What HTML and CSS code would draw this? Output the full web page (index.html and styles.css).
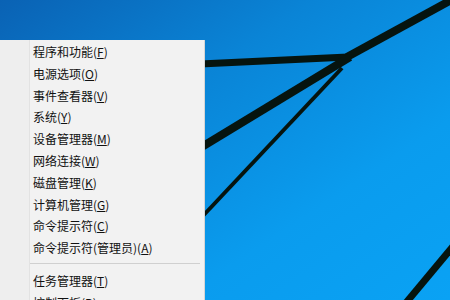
FILE: index.html
```html
<!DOCTYPE html>
<html lang="zh-CN">
<head>
<meta charset="utf-8">
<link rel="stylesheet" href="styles.css">
</head>
<body>
<svg class="wallpaper" width="450" height="300" viewBox="0 0 450 300">
  <defs>
    <linearGradient id="bg" x1="0" y1="0" x2="1" y2="1">
      <stop offset="0" stop-color="#0a62b4"/>
      <stop offset="0.35" stop-color="#0a84d6"/>
      <stop offset="0.7" stop-color="#0a9cee"/>
      <stop offset="1" stop-color="#0aa2f4"/>
    </linearGradient>
  </defs>
  <rect width="450" height="300" fill="url(#bg)"/>
  <g stroke="#06140f" stroke-linecap="butt" fill="none">
    <line x1="347" y1="57" x2="455" y2="-2" stroke-width="8"/>
    <line x1="200" y1="64" x2="348" y2="57" stroke-width="7"/>
    <line x1="200" y1="148" x2="350" y2="57" stroke-width="8"/>
    <line x1="200" y1="219" x2="342" y2="68" stroke-width="4"/>
    <line x1="455" y1="244" x2="405" y2="304" stroke-width="7"/>
  </g>
</svg>
<div class="menu">
  <div class="item">程序和功能(<u>F</u>)</div>
  <div class="item">电源选项(<u>O</u>)</div>
  <div class="item">事件查看器(<u>V</u>)</div>
  <div class="item">系统(<u>Y</u>)</div>
  <div class="item">设备管理器(<u>M</u>)</div>
  <div class="item">网络连接(<u>W</u>)</div>
  <div class="item">磁盘管理(<u>K</u>)</div>
  <div class="item">计算机管理(<u>G</u>)</div>
  <div class="item">命令提示符(<u>C</u>)</div>
  <div class="item">命令提示符(管理员)(<u>A</u>)</div>
  <div class="sep"></div>
  <div class="item">任务管理器(<u>T</u>)</div>
  <div class="item">控制面板(<u>P</u>)</div>
</div>
</body>
</html>
```

FILE: styles.css
```css
html, body {
  margin: 0;
  padding: 0;
  width: 450px;
  height: 300px;
  overflow: hidden;
}
body {
  position: relative;
  font-family: "Noto Sans CJK SC", "Noto Sans", sans-serif;
  font-size: 12px;
  color: #111;
}
.wallpaper {
  position: absolute;
  left: 0;
  top: 0;
  z-index: 0;
}
.menu {
  position: relative;
  z-index: 1;
  margin-top: 40px;
  width: 205px;
  background: linear-gradient(to right, #eeeeee 0, #eeeeee 29px, #e2e2e2 29px, #e2e2e2 30px, #f2f2f2 30px);
  border-right: 1px solid #d6d6d6;
  padding-top: 1px;
  box-sizing: border-box;
}
.item {
  height: 21.8px;
  line-height: 21.8px;
  padding-left: 33px;
  white-space: nowrap;
}
.item u {
  text-underline-offset: 1px;
}
.sep {
  height: 1px;
  background: #d0d0d0;
  margin: 4px 4px 6px 30px;
}
```
